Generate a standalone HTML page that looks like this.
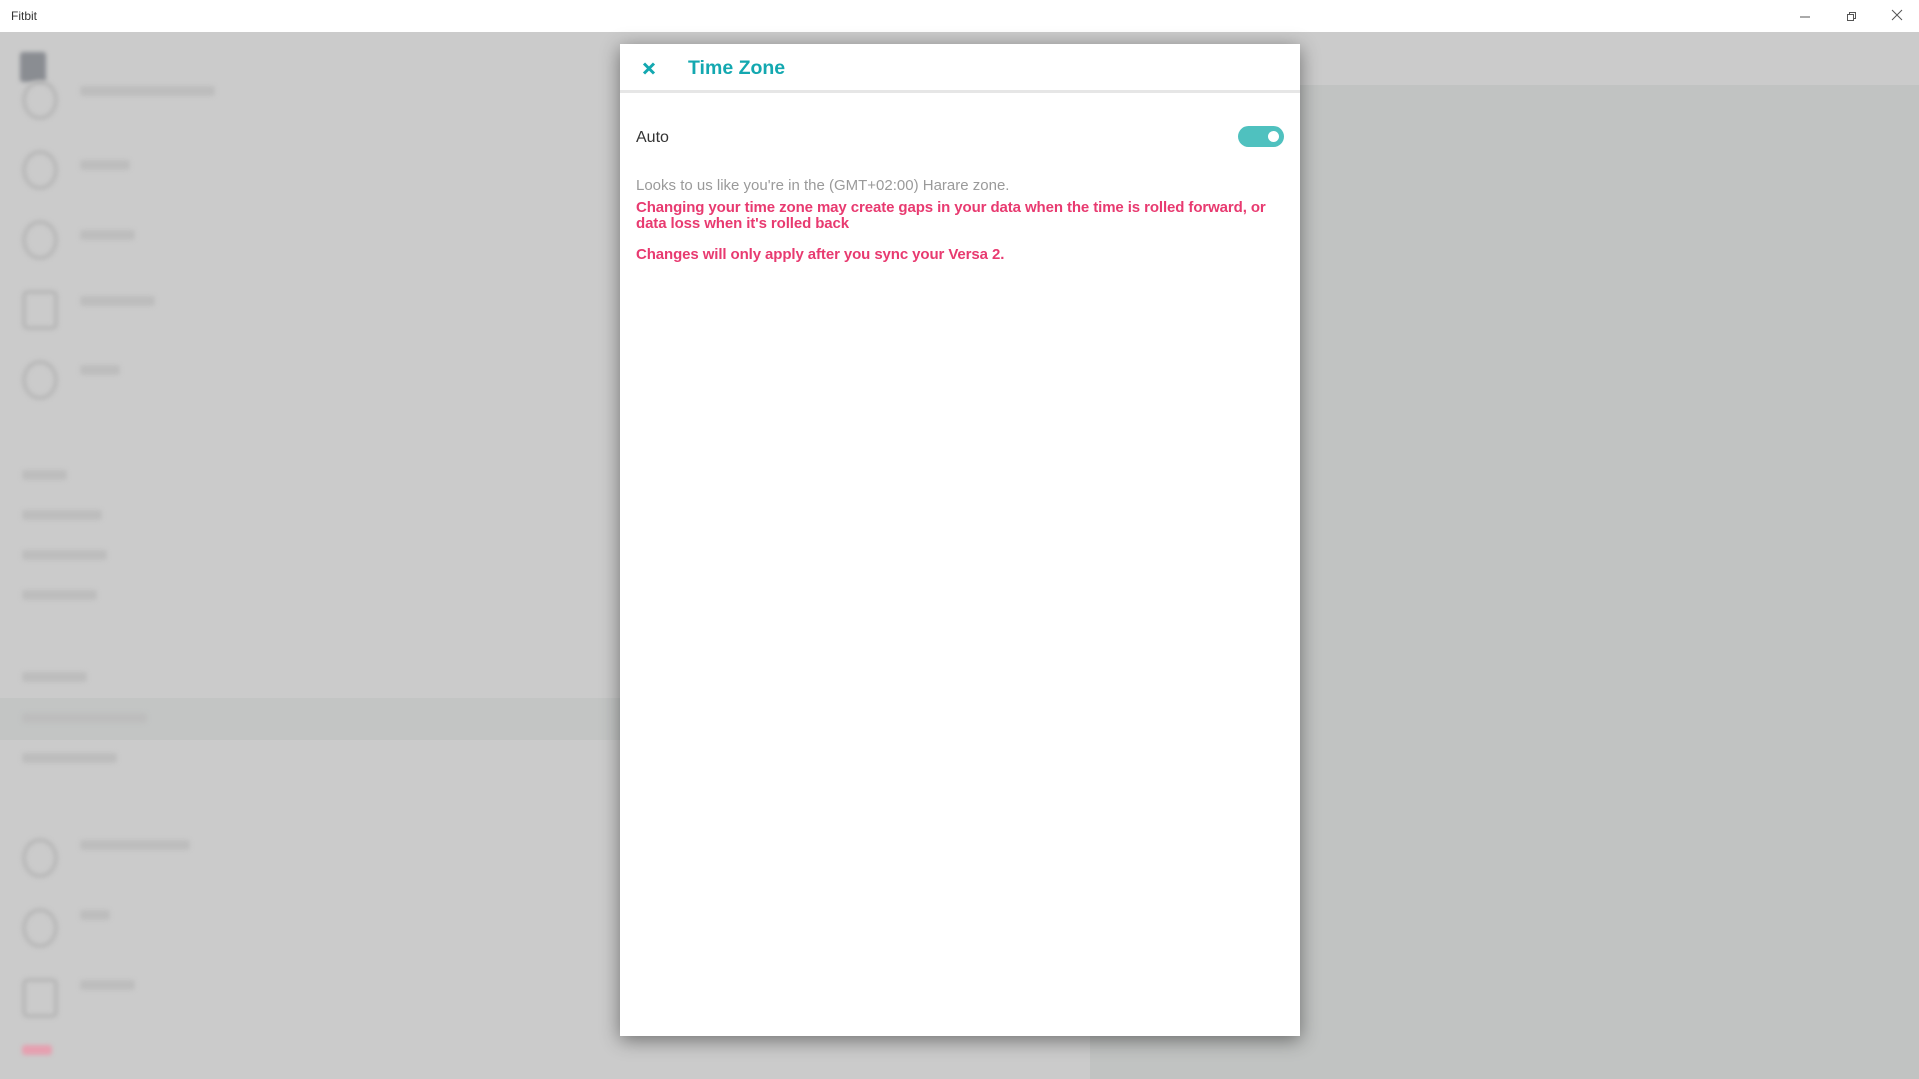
<!DOCTYPE html>
<html><head><meta charset="utf-8"><style>
*{margin:0;padding:0;box-sizing:border-box}
body{width:1919px;height:1079px;overflow:hidden;background:#cbcbcb;font-family:"Liberation Sans",sans-serif;position:relative}
.tb{position:absolute;left:0;top:0;width:1919px;height:32px;background:#fff;font-size:12px;color:#333}
.tb .t{position:absolute;left:11px;top:9px}
.right{position:absolute;left:1090px;top:85px;width:829px;height:994px;background:#c1c3c2}
.blob{position:absolute;background:#bdbdbd;border-radius:3px;filter:blur(2px)}
.ic{position:absolute;border:4px solid #b8b8b8;border-radius:50%;filter:blur(2px)}
.modal{position:absolute;left:620px;top:44px;width:680px;height:992px;background:#fff;box-shadow:0 4px 18px rgba(0,0,0,.45)}
.hd{position:absolute;left:0;top:0;width:680px;height:49px;border-bottom:3px solid #e6e6e6}
.x{position:absolute;left:22px;top:18px}
.title{position:absolute;left:68px;top:13px;font-size:19.5px;font-weight:bold;color:#13a8b0}
.auto{position:absolute;left:16px;top:85px;font-size:16px;color:#333}
.tog{position:absolute;left:618px;top:82px;width:46px;height:21px;border-radius:11px;background:#4fc1bf}
.tog::after{content:"";position:absolute;right:5px;top:5px;width:11px;height:11px;border-radius:50%;background:#fff}
.p{position:absolute;left:16px;font-size:15px;line-height:16px}
.g{color:#9a9a9a}
.r{color:#e83a70;font-weight:bold;letter-spacing:-0.1px}
</style></head><body>
<div class="tb"><span class="t">Fitbit</span>
<svg style="position:absolute;left:1799px;top:10px" width="12" height="12"><path d="M1 7h10" stroke="#555"/></svg>
<svg style="position:absolute;left:1845px;top:10px" width="12" height="12"><path d="M2.5 4.5h6v6h-6zM4.5 4.5v-2h6v6h-2" fill="none" stroke="#555"/></svg>
<svg style="position:absolute;left:1891px;top:9px" width="12" height="12"><path d="M1 1l10 10M11 1L1 11" stroke="#555"/></svg>
</div>
<div class="right"></div>
<div class="blob" style="left:20px;top:52px;width:26px;height:30px;background:#8a8d92"></div>
<div class="ic" style="left:22px;top:80px;width:36px;height:40px"></div>
<div class="ic" style="left:22px;top:150px;width:36px;height:40px"></div>
<div class="ic" style="left:22px;top:220px;width:36px;height:40px"></div>
<div class="ic" style="left:22px;top:290px;width:36px;height:40px;border-radius:6px"></div>
<div class="ic" style="left:22px;top:360px;width:36px;height:40px"></div>
<div class="ic" style="left:22px;top:838px;width:36px;height:40px"></div>
<div class="ic" style="left:22px;top:908px;width:36px;height:40px"></div>
<div class="ic" style="left:22px;top:978px;width:36px;height:40px;border-radius:6px"></div>
<div class="blob" style="left:80px;top:86px;width:135px;height:10px"></div>
<div class="blob" style="left:80px;top:160px;width:50px;height:10px"></div>
<div class="blob" style="left:80px;top:230px;width:55px;height:10px"></div>
<div class="blob" style="left:80px;top:296px;width:75px;height:10px"></div>
<div class="blob" style="left:80px;top:365px;width:40px;height:10px"></div>
<div class="blob" style="left:22px;top:470px;width:45px;height:10px"></div>
<div class="blob" style="left:22px;top:510px;width:80px;height:10px"></div>
<div class="blob" style="left:22px;top:550px;width:85px;height:10px"></div>
<div class="blob" style="left:22px;top:590px;width:75px;height:10px"></div>
<div class="blob" style="left:22px;top:672px;width:65px;height:10px"></div>
<div style="position:absolute;left:0;top:698px;width:620px;height:42px;background:#c3c5c4"></div>
<div class="blob" style="left:22px;top:713px;width:125px;height:10px"></div>
<div class="blob" style="left:22px;top:753px;width:95px;height:10px"></div>
<div class="blob" style="left:80px;top:840px;width:110px;height:10px"></div>
<div class="blob" style="left:80px;top:910px;width:30px;height:10px"></div>
<div class="blob" style="left:80px;top:980px;width:55px;height:10px"></div>
<div class="blob" style="left:22px;top:1045px;width:30px;height:10px;background:#e6a0b0"></div>
<div class="modal">
<div class="hd">
<svg class="x" width="14" height="13"><path d="M2 1.5l10 10M12 1.5l-10 10" stroke="#13a8b0" stroke-width="3"/></svg>
<div class="title">Time Zone</div>
</div>
<div class="auto">Auto</div>
<div class="tog"></div>
<div class="p g" style="top:134px">Looks to us like you're in the (GMT+02:00) Harare zone.</div>
<div class="p r" style="top:156px">Changing your time zone may create gaps in your data when the time is rolled forward, or<br>data loss when it's rolled back</div>
<div class="p r" style="top:203px">Changes will only apply after you sync your Versa 2.</div>
</div>
</body></html>
